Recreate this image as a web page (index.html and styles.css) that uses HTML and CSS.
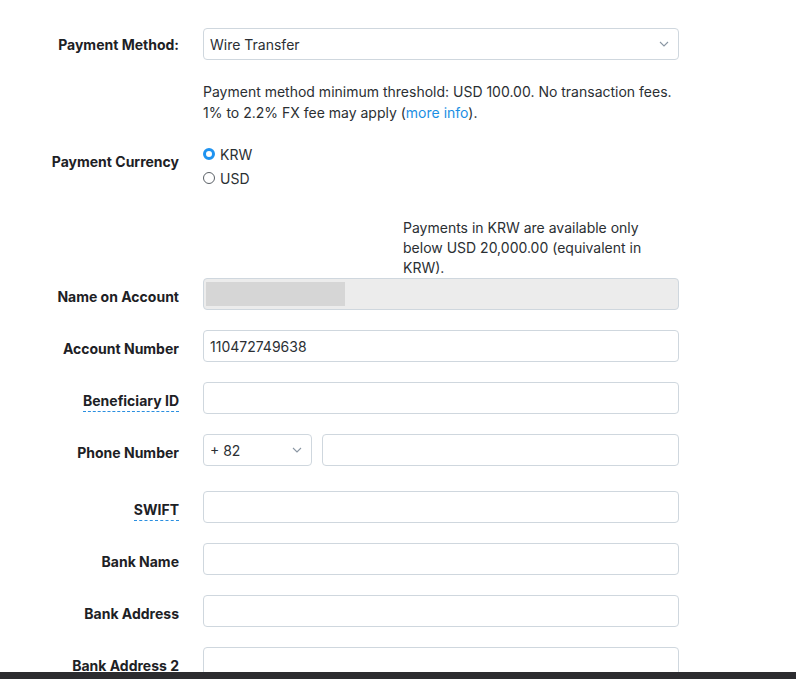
FILE: index.html
```html
<!DOCTYPE html>
<html lang="en">
<head>
<meta charset="utf-8">
<title>Payment settings</title>
<link rel="stylesheet" href="styles.css">
</head>
<body>
<form class="form">
  <div class="row row-method">
    <label class="label">Payment Method:</label>
    <div class="control select">
      <span class="value">Wire Transfer</span>
      <svg class="chev" width="10" height="6" viewBox="0 0 10 6"><path d="M1 1l4 4 4-4" fill="none" stroke="#8a96a3" stroke-width="1.1"/></svg>
    </div>
  </div>

  <div class="row row-help">
    <span></span>
    <p class="help">Payment method minimum threshold: USD 100.00. No transaction fees. 1% to 2.2% FX fee may apply (<a href="#" class="link">more info</a>).</p>
  </div>

  <div class="row row-currency">
    <label class="label label-currency">Payment Currency</label>
    <div class="radios">
      <div class="radio"><span class="dot dot-on"></span><span>KRW</span></div>
      <div class="radio"><span class="dot"></span><span>USD</span></div>
    </div>
  </div>

  <div class="row row-note">
    <span></span>
    <p class="note">Payments in KRW are available only below USD 20,000.00 (equivalent in KRW).</p>
  </div>

  <div class="row row-first">
    <label class="label">Name on Account</label>
    <div class="control disabled"><span class="masked"></span></div>
  </div>

  <div class="row">
    <label class="label">Account Number</label>
    <div class="control"><span class="value">110472749638</span></div>
  </div>

  <div class="row">
    <label class="label"><span class="hint">Beneficiary ID</span></label>
    <div class="control"></div>
  </div>

  <div class="row">
    <label class="label">Phone Number</label>
    <div class="phone">
      <div class="control select code">
        <span class="value">+ 82</span>
        <svg class="chev" width="10" height="6" viewBox="0 0 10 6"><path d="M1 1l4 4 4-4" fill="none" stroke="#8a96a3" stroke-width="1.1"/></svg>
      </div>
      <div class="control"></div>
    </div>
  </div>

  <div class="row row-swift">
    <label class="label"><span class="hint">SWIFT</span></label>
    <div class="control"></div>
  </div>

  <div class="row">
    <label class="label">Bank Name</label>
    <div class="control"></div>
  </div>

  <div class="row">
    <label class="label">Bank Address</label>
    <div class="control"></div>
  </div>

  <div class="row">
    <label class="label">Bank Address 2</label>
    <div class="control"></div>
  </div>
</form>
<div class="bottombar"></div>
</body>
</html>
```

FILE: styles.css
```css
html, body {
  margin: 0;
  padding: 0;
  background: #ffffff;
  overflow: hidden;
}
body {
  font-family: Inter, "Liberation Sans", sans-serif;
  font-size: 14px;
  color: #2b2f33;
  height: 679px;
}
.form {
  padding-top: 28px;
}
.row {
  display: grid;
  grid-template-columns: 179px 476px;
  column-gap: 24px;
  align-items: center;
  margin-top: 20px;
}
.row-method { margin-top: 0; }
.row-help { margin-top: 21px; align-items: start; }
.row-currency { margin-top: 19px; align-items: start; }
.row-note { margin-top: 28px; align-items: start; }
.row-first { margin-top: 0; }
.row-swift { margin-top: 25px; }

.label {
  text-align: right;
  font-weight: 700;
  font-size: 14px;
  color: #1d2125;
  letter-spacing: 0;
  padding-top: 5px;
  white-space: nowrap;
}
.row-method .label { padding-top: 0; }
.label-currency {
  padding-top: 10px;
  line-height: 20px;
}
.hint {
  border-bottom: 1px dashed #2a8fe0;
  padding-bottom: 2px;
}
.control {
  box-sizing: border-box;
  height: 32px;
  border: 1px solid #cfd7de;
  border-radius: 4px;
  background: #fff;
  display: flex;
  align-items: center;
  padding: 0 6px;
}
.value {
  color: #2b2f33;
  font-size: 14px;
}
.select {
  justify-content: space-between;
  padding-right: 9px;
}
.chev { display: block; }
.disabled {
  background: #ececec;
  padding: 3px 2px;
  align-items: stretch;
}
.masked {
  width: 139px;
  background: #d6d6d6;
}
.phone {
  display: grid;
  grid-template-columns: 109px 1fr;
  column-gap: 10px;
}
.help {
  margin: 0;
  line-height: 21px;
  color: #2b2f33;
}
.link {
  color: #1a8fe3;
  text-decoration: none;
}
.radios {
  display: flex;
  flex-direction: column;
}
.radio {
  display: flex;
  align-items: center;
  height: 24px;
  gap: 5px;
}
.dot {
  box-sizing: border-box;
  width: 12px;
  height: 12px;
  border-radius: 50%;
  border: 1px solid #5a6066;
  background: #fff;
}
.dot-on {
  border: 3.5px solid #1f93f0;
}
.note {
  margin: 0 0 0 200px;
  width: 240px;
  line-height: 20px;
  color: #2b2f33;
}
.bottombar {
  position: fixed;
  left: 0;
  right: 0;
  bottom: 0;
  height: 7px;
  background: #2c2c2f;
}
```
